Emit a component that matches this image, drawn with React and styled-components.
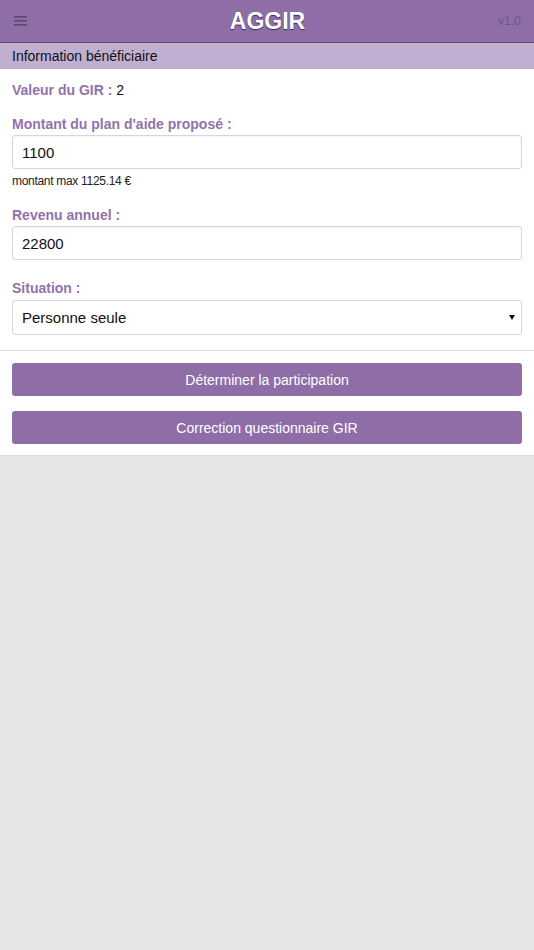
import React from "react";
import styled, { createGlobalStyle } from "styled-components";

const Global = createGlobalStyle`
  html, body { margin: 0; padding: 0; background: #e6e6e6; }
  body { font-family: "Liberation Sans", Arial, sans-serif; }
  * { box-sizing: border-box; }
`;

const Header = styled.header`
  height: 43px;
  background: #8f6ea8;
  border-bottom: 1px solid #5c4870;
  display: flex;
  align-items: center;
  justify-content: space-between;
  padding: 0 13px 0 14px;
`;

const MenuButton = styled.span`
  display: flex;
  width: 40px;
  color: #5c4870;
`;

const Title = styled.h1`
  margin: 0;
  font-size: 23px;
  font-weight: bold;
  color: #fff;
  text-shadow: 0 1px 1px rgba(40, 20, 60, 0.8);
`;

const Version = styled.span`
  width: 40px;
  text-align: right;
  font-size: 12px;
  color: #6a5780;
`;

const SubHeader = styled.div`
  height: 26px;
  line-height: 27px;
  background: #c0afd1;
  padding-left: 12px;
  font-size: 14px;
  color: #111;
`;

const Section = styled.section`
  background: #fff;
  padding: ${(p) => p.$pad};
  border-bottom: 1px solid #dcdcdc;
`;

const Row = styled.div`
  font-size: 14px;
  line-height: 20px;
  margin-bottom: ${(p) => p.$mb || 0}px;
  color: #111;
`;

const Label = styled.label`
  display: block;
  font-size: 14px;
  font-weight: bold;
  line-height: 20px;
  color: #9272ad;
  margin-bottom: ${(p) => p.$mb || 1}px;
`;

const Strong = styled.span`
  font-weight: bold;
  color: #9272ad;
`;

const Field = styled.div`
  margin-bottom: ${(p) => p.$mb || 0}px;
`;

const Input = styled.input`
  display: block;
  width: 100%;
  height: 34px;
  border: 1px solid #d6d6d6;
  border-radius: 3px;
  padding: 0 9px;
  font-family: "Liberation Sans", Arial, sans-serif;
  font-size: 15px;
  color: #111;
  background: #fff;
  box-shadow: inset 0 1px 1px rgba(0, 0, 0, 0.04);
  outline: none;
`;

const Help = styled.div`
  font-size: 12px;
  line-height: 17px;
  margin-top: 4px;
  color: #222;
  letter-spacing: -0.3px;
`;

const SelectWrap = styled.div`
  position: relative;
`;

const Select = styled.select`
  display: block;
  width: 100%;
  height: 35px;
  border: 1px solid #d6d6d6;
  border-radius: 3px;
  padding: 0 9px;
  font-family: "Liberation Sans", Arial, sans-serif;
  font-size: 15px;
  color: #111;
  background: #fff;
  appearance: none;
  -webkit-appearance: none;
  outline: none;
`;

const Arrow = styled.span`
  position: absolute;
  right: 7px;
  top: 15px;
  width: 0;
  height: 0;
  border-left: 3px solid transparent;
  border-right: 3px solid transparent;
  border-top: 5px solid #111;
  pointer-events: none;
`;

const Button = styled.button`
  display: block;
  width: 100%;
  height: 33px;
  border: none;
  border-radius: 3px;
  background: #8f6ea8;
  color: #fff;
  font-family: "Liberation Sans", Arial, sans-serif;
  font-size: 14px;
  margin-bottom: ${(p) => p.$mb || 0}px;
  cursor: pointer;
`;

export default function App() {
  return (
    <>
      <Global />
      <Header>
        <MenuButton>
          <svg width="14" height="10" viewBox="0 0 14 10">
            <rect x="0" y="0" width="13" height="1.6" fill="currentColor" />
            <rect x="0" y="4" width="13" height="1.6" fill="currentColor" />
            <rect x="0" y="8" width="13" height="1.6" fill="currentColor" />
          </svg>
        </MenuButton>
        <Title>AGGIR</Title>
        <Version>v1.0</Version>
      </Header>
      <SubHeader>Information bénéficiaire</SubHeader>
      <Section $pad="11px 12px 15px">
        <Row $mb={14}>
          <Strong>Valeur du GIR :</Strong> 2
        </Row>
        <Field $mb={15}>
          <Label>Montant du plan d'aide proposé :</Label>
          <Input defaultValue="1100" />
          <Help>montant max 1125.14 €</Help>
        </Field>
        <Field $mb={18}>
          <Label>Revenu annuel :</Label>
          <Input defaultValue="22800" />
        </Field>
        <Field>
          <Label $mb={2}>Situation :</Label>
          <SelectWrap>
            <Select defaultValue="seule">
              <option value="seule">Personne seule</option>
              <option value="couple">Couple</option>
            </Select>
            <Arrow />
          </SelectWrap>
        </Field>
      </Section>
      <Section $pad="12px 12px 11px">
        <Button $mb={15}>Déterminer la participation</Button>
        <Button>Correction questionnaire GIR</Button>
      </Section>
    </>
  );
}
